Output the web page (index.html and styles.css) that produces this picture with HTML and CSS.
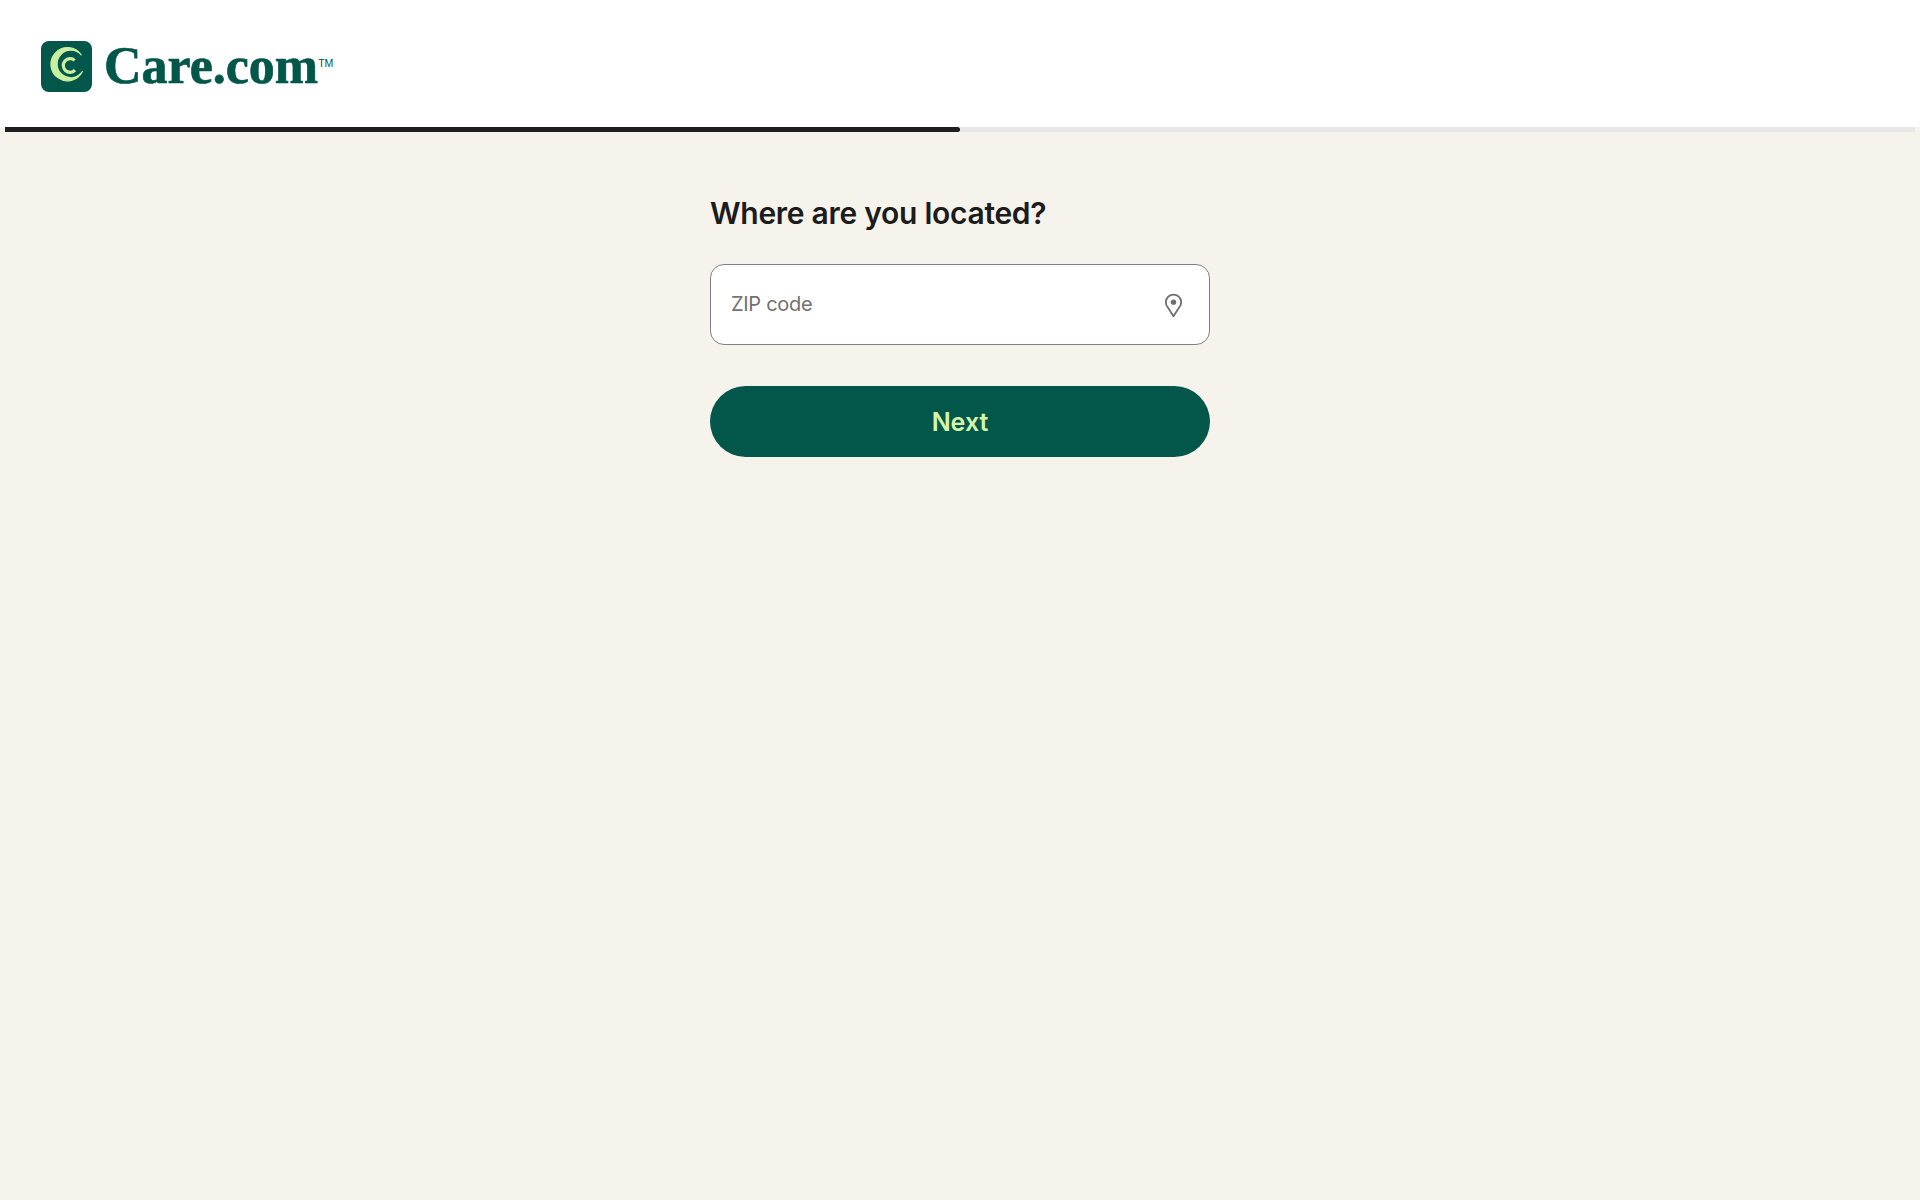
FILE: index.html
```html
<!DOCTYPE html>
<html lang="en">
<head>
    <meta charset="UTF-8">
    <meta name="viewport" content="width=device-width, initial-scale=1.0">
    <title>Care.com - Where are you located?</title>
    <link rel="stylesheet" href="styles.css">
</head>
<body>
    <header class="header">
        <a class="logo" href="#">
            <svg class="logo-icon" viewBox="0 0 51 51" width="51" height="51">
                <rect width="51" height="51" rx="8" fill="#03574a"/>
                <!-- outer swirl -->
                <path d="M40.2 13.8 A16.6 16.6 0 1 0 41.4 30.6 A13.8 13.8 0 1 1 40.2 13.8 Z" fill="#c9f0a0" stroke="#c9f0a0" stroke-width="1.2" stroke-linejoin="round"/>
                <!-- inner swirl -->
                <path d="M33.6 19.4 A6.8 6.8 0 1 0 34 29.2" fill="none" stroke="#c9f0a0" stroke-width="3.2"/>
            </svg>
            <span class="logo-text">Care.com</span><span class="logo-tm">TM</span>
        </a>
    </header>

    <div class="progress">
        <div class="progress-fill"></div>
    </div>

    <main class="content">
        <form class="location-form">
            <h1>Where are you located?</h1>
            <div class="zip-field">
                <input type="text" placeholder="ZIP code">
                <svg class="pin-icon" viewBox="0 0 24 24" width="27" height="27">
                    <path d="M12 21.5 L6.9 13.6 A6.8 6.8 0 1 1 17.1 13.6 Z" fill="none" stroke="#6e6e6e" stroke-width="1.6" stroke-linejoin="round"/>
                    <circle cx="12" cy="9" r="2.4" fill="#6e6e6e"/>
                </svg>
            </div>
            <button type="button" class="next-btn">Next</button>
        </form>
    </main>
</body>
</html>
```

FILE: styles.css
```css
* {
    box-sizing: border-box;
}
html, body {
    height: 100%;
}
body {
    font-family: Inter, "Liberation Sans", sans-serif;
    background-color: #f6f3ec;
    margin: 0;
    padding: 0;
}
.header {
    height: 127px;
    background-color: #fff;
    padding: 41px 0 0 41px;
}
.logo {
    display: inline-flex;
    align-items: flex-start;
    text-decoration: none;
    color: #03574a;
}
.logo-icon {
    display: block;
    margin-right: 12px;
}
.logo-text {
    font-family: "Liberation Serif", serif;
    font-weight: 700;
    font-size: 52px;
    line-height: 50px;
    -webkit-text-stroke: 0.7px #03574a;
}
.logo-tm {
    font-family: "Liberation Sans", sans-serif;
    font-size: 10.5px;
    line-height: 10px;
    margin: 17px 0 0 0;
}
.progress {
    height: 5px;
    margin: 0 5px;
    background-color: #e8e6e6;
}
.progress-fill {
    width: 50%;
    height: 100%;
    background-color: #1f1f1f;
    border-radius: 0 3px 3px 0;
}
.content {
    display: flex;
    justify-content: center;
    padding-top: 63px;
}
.location-form {
    width: 500px;
}
h1 {
    margin: 0 0 32px;
    font-size: 30px;
    line-height: 37px;
    font-weight: 600;
    letter-spacing: -0.28px;
    color: #1c1c1c;
}
.zip-field {
    display: flex;
    align-items: center;
    height: 81px;
    padding: 0 22px 0 20px;
    background-color: #fff;
    border: 1px solid #808080;
    border-radius: 14px;
    margin-bottom: 41px;
}
.zip-field input {
    flex: 1;
    min-width: 0;
    height: 30px;
    margin-bottom: 2px;
    border: none;
    outline: none;
    padding: 0;
    background: transparent;
    font-family: inherit;
    font-size: 20px;
    letter-spacing: -0.3px;
    color: #1c1c1c;
}
.zip-field input::placeholder {
    color: #717171;
    opacity: 1;
}
.pin-icon {
    display: block;
    flex-shrink: 0;
    margin-top: 2px;
}
.next-btn {
    display: block;
    width: 100%;
    height: 71px;
    border: none;
    border-radius: 36px;
    background-color: #03574a;
    color: #d5f5aa;
    font-family: inherit;
    font-size: 25px;
    font-weight: 600;
    cursor: pointer;
}
```
